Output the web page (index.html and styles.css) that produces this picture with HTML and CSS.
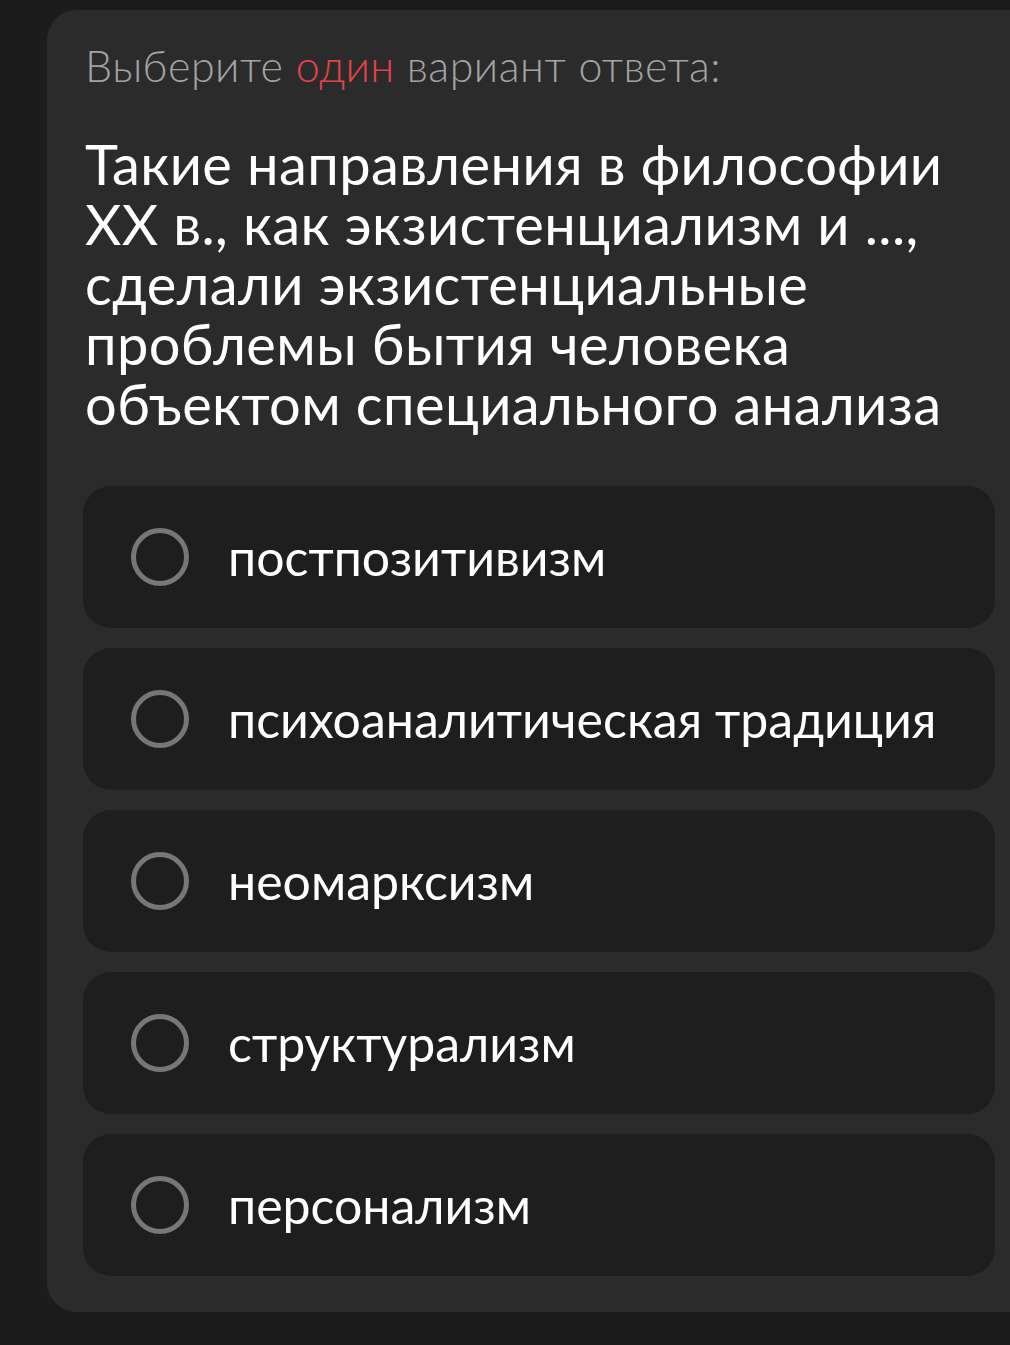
FILE: index.html
```html
<!DOCTYPE html>
<html lang="ru">
<head>
<meta charset="utf-8">
<link rel="stylesheet" href="styles.css">
</head>
<body>
<div class="card">
  <div class="hint">Выберите <span class="accent">один</span> вариант ответа:</div>
  <div class="question">Такие направления в философии ХХ в., как экзистенциализм и ..., сделали экзистенциальные проблемы бытия человека объектом специального анализа</div>
  <div class="options">
    <div class="option"><span class="radio"></span><span class="label">постпозитивизм</span></div>
    <div class="option"><span class="radio"></span><span class="label">психоаналитическая традиция</span></div>
    <div class="option"><span class="radio"></span><span class="label">неомарксизм</span></div>
    <div class="option"><span class="radio"></span><span class="label">структурализм</span></div>
    <div class="option"><span class="radio"></span><span class="label">персонализм</span></div>
  </div>
</div>
</body>
</html>
```
FILE: styles.css
```css
html, body {
  margin: 0;
  padding: 0;
  background: #1c1c1c;
  overflow: hidden;
}
body {
  width: 1010px;
  height: 1345px;
  font-family: Lato, "Noto Sans", sans-serif;
}
.card {
  margin: 10px 0 0 47px;
  width: 1000px;
  background: #2b2b2b;
  border-radius: 30px 0 0 30px;
  padding: 26px 0 36px 36px;
  box-sizing: border-box;
}
.hint {
  padding-left: 2px;
  color: #a3a3a3;
  font-size: 43px;
  line-height: 60px;
  letter-spacing: 0.5px;
  font-weight: 300;
}
.accent {
  color: #e2434b;
}
.question {
  padding-left: 2px;
  margin-top: 38px;
  width: 910px;
  color: #ffffff;
  font-size: 56px;
  line-height: 60px;
  letter-spacing: 0.4px;
  font-weight: 400;
}
.options {
  margin-top: 52px;
  width: 912px;
  display: flex;
  flex-direction: column;
  gap: 20px;
}
.option {
  height: 142px;
  background: #1e1e1e;
  border-radius: 28px;
  display: flex;
  align-items: center;
  padding-left: 48px;
  box-sizing: border-box;
}
.radio {
  width: 58px;
  height: 58px;
  border: 5px solid #777777;
  border-radius: 50%;
  box-sizing: border-box;
  flex: none;
}
.label {
  margin-left: 39px;
  color: #ffffff;
  font-size: 50px;
  font-weight: 400;
}
```
